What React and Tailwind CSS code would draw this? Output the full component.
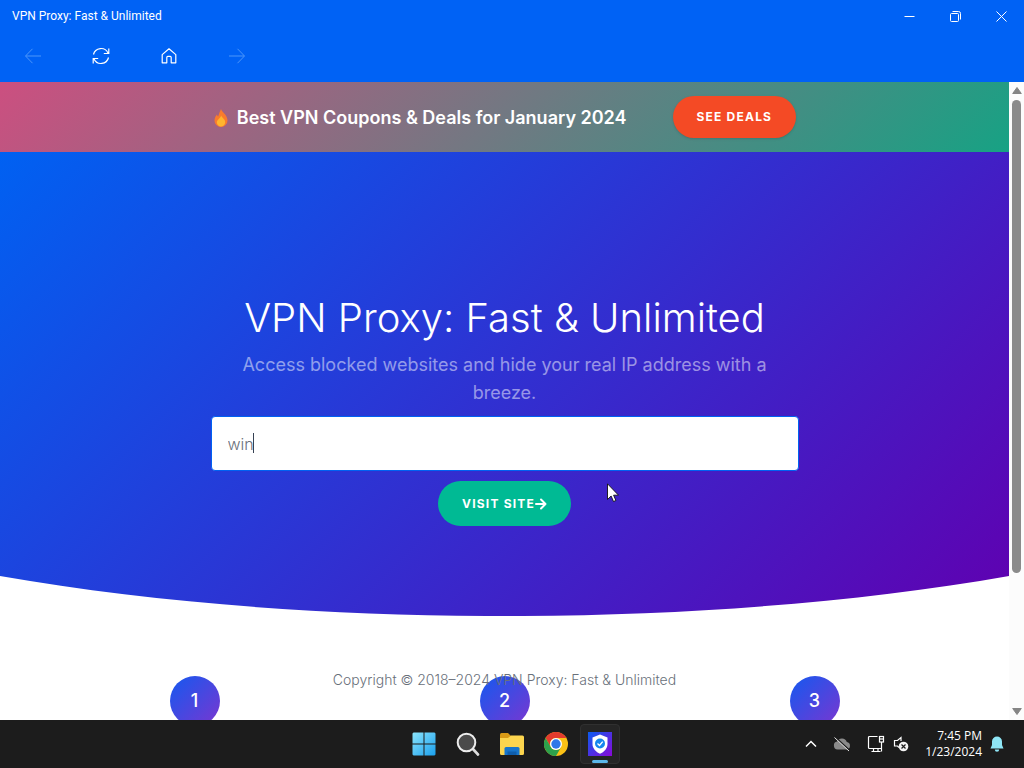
import { useState } from "react";

const APP_NAME = "VPN Proxy: Fast & Unlimited";

const BackIcon = () => (
    <svg className="w-4 h-4" viewBox="0 0 16 16" fill="none" stroke="currentColor">
        <path d="M16 8H0.8M7.5 0.8L0.5 8l7 7.2" />
    </svg>
);

const ForwardIcon = () => (
    <svg className="w-4 h-4" viewBox="0 0 16 16" fill="none" stroke="currentColor">
        <path d="M0 8h15.2M8.5 0.8l7 7.2-7 7.2" />
    </svg>
);

const ReloadIcon = () => (
    <svg className="w-[18px] h-[18px]" viewBox="0 0 18 18" fill="none" stroke="currentColor" strokeWidth="1.2">
        <path d="M1.5 7.5A7.7 7.7 0 0 1 16 6M16.8 1.5v5h-5M16.5 10.5A7.7 7.7 0 0 1 2 12M1.2 16.5v-5h5" />
    </svg>
);

const HomeIcon = () => (
    <svg className="w-4 h-4" viewBox="0 0 16 16" fill="none" stroke="currentColor" strokeWidth="1.2" strokeLinejoin="round">
        <path d="M1.2 6.6L8 0.8l6.8 5.8v8.2h-4.6V9.4a1 1 0 0 0-1-1H6.8a1 1 0 0 0-1 1v5.4H1.2z" />
    </svg>
);

const TitleBar = () => (
    <div className="h-8 flex items-center justify-between pl-3">
        <span className="text-xs font-[Roboto,sans-serif]">{APP_NAME}</span>
        <div className="flex h-full">
            <button aria-label="Minimize" className="w-[46px] flex items-center justify-center">
                <svg className="w-[11px] h-[11px]" viewBox="0 0 11 11" stroke="currentColor">
                    <path d="M0.5 5.5h10" />
                </svg>
            </button>
            <button aria-label="Restore" className="w-[46px] flex items-center justify-center">
                <svg className="w-[11px] h-[11px]" viewBox="0 0 11 11" fill="none" stroke="currentColor">
                    <rect x="0.5" y="2.5" width="8" height="8" rx="1" />
                    <path d="M2.5 0.5h6a2 2 0 0 1 2 2v6" />
                </svg>
            </button>
            <button aria-label="Close" className="w-[46px] flex items-center justify-center">
                <svg className="w-[11px] h-[11px]" viewBox="0 0 11 11" stroke="currentColor">
                    <path d="M0.5 0.5l10 10M10.5 0.5l-10 10" />
                </svg>
            </button>
        </div>
    </div>
);

const Toolbar = () => (
    <nav className="h-[50px] flex items-center pl-4 pb-0.5 gap-[34px]">
        <button aria-label="Back" disabled className="w-[34px] h-8 flex items-center justify-center text-[#4c96fa]">
            <BackIcon />
        </button>
        <button aria-label="Reload" className="w-[34px] h-8 flex items-center justify-center">
            <ReloadIcon />
        </button>
        <button aria-label="Home" className="w-[34px] h-8 flex items-center justify-center">
            <HomeIcon />
        </button>
        <button aria-label="Forward" disabled className="w-[34px] h-8 flex items-center justify-center text-[#4c96fa]">
            <ForwardIcon />
        </button>
    </nav>
);

const DealsBanner = () => (
    <div className="h-[70px] flex items-center justify-center gap-[46px] bg-linear-[135deg] from-[#cc4f80] to-[#17a284] text-white">
        <p className="flex items-center gap-2 pt-0.5 text-lg font-semibold">
            <svg className="w-4 h-5" viewBox="0 0 16 20">
                <path d="M8 1c.6 3 6.5 5.600 6.500 11.500A6.500 6.500 0 0 1 8 19a6.500 6.500 0 0 1-6.500-6.500C1.500 9.500 3 7.500 4 6.500c.2 1 .5 1.500 1.200 2C6 6 7 3 8 1z" fill="#f97b2d" />
                <path d="M8.200 7.500c.5 2 4 3.500 4 6.700A4.200 4.200 0 0 1 8 18.400a4.200 4.200 0 0 1-4.200-4.200c0-2.200 3.200-3.400 4.400-6.700z" fill="#ffb52e" />
            </svg>
            Best VPN Coupons &amp; Deals for January 2024
        </p>
        <a
            href="#deals"
            className="h-[42px] px-6 flex items-center rounded-full bg-[#f44a25] text-xs font-bold tracking-widest shadow"
        >
            SEE DEALS
        </a>
    </div>
);

const Hero = () => {
    const [site, setSite] = useState("win");

    return (
        <header className="bg-linear-[135deg] from-[#0061f2] to-[#6000b0] text-white">
            <div className="pt-[142px] pb-[50px] px-4 flex flex-col items-center text-center">
                <h1 className="text-[40px] leading-12 font-light">{APP_NAME}</h1>
                <p className="mt-[9px] max-w-[560px] text-lg leading-7 text-white/50">
                    Access blocked websites and hide your real IP address with a breeze.
                </p>
                <form
                    className="mt-[9px] w-full max-w-[588px] flex flex-col items-center gap-[10px]"
                    onSubmit={(e) => e.preventDefault()}
                >
                    <div className="relative w-full">
                        <input
                            aria-label="Website address"
                            value={site}
                            onChange={(e) => setSite(e.target.value)}
                            className="block w-full h-[55px] px-4 rounded bg-white text-base font-light text-[#69707a] border border-[#0061f2] focus:outline-none"
                        />
                        <span className="absolute left-[42px] top-[17px] w-px h-5 bg-gray-700" />
                    </div>
                    <button
                        type="submit"
                        className="h-[45px] px-6 flex items-center rounded-full bg-[#00ba94] text-xs font-bold tracking-widest"
                    >
                        VISIT SITE
                        <svg className="w-3 h-3" viewBox="0 0 12 12" fill="none" stroke="currentColor" strokeWidth="2">
                            <path d="M1 6h9.500M6 1.500L10.500 6 6 10.500" strokeLinecap="round" strokeLinejoin="round" />
                        </svg>
                    </button>
                </form>
            </div>
            <svg className="block w-full h-10" viewBox="0 0 100 40" preserveAspectRatio="none">
                <path d="M0 0C30 53.400 70 53.400 100 0V40H0z" fill="#fff" />
            </svg>
        </header>
    );
};

const Steps = () => (
    <section className="relative pt-[60px]">
        <ol className="max-w-[930px] mx-auto grid grid-cols-3 justify-items-center">
            {[1, 2, 3].map((step) => (
                <li
                    key={step}
                    className="w-[50px] h-[50px] flex items-center justify-center rounded-full bg-linear-[135deg] from-[#1459f0] to-[#7a36d0] text-lg font-medium text-white"
                >
                    {step}
                </li>
            ))}
        </ol>
        <p className="absolute inset-x-0 top-[54px] text-center text-sm font-light text-[#69707a]">
            Copyright © 2018–2024 {APP_NAME}
        </p>
    </section>
);

const ScrollBar = () => (
    <div className="w-[15px] shrink-0 flex flex-col items-center justify-between bg-[#fcfcfc] py-1">
        <svg className="w-[10px] h-[9px]" viewBox="0 0 10 9">
            <path d="M5 1.500L9.300 7.500H0.700z" fill="#858585" stroke="#858585" strokeLinejoin="round" />
        </svg>
        <div className="flex-1 w-full pt-[5px] flex justify-center">
            <div className="w-[9px] h-[78%] rounded-full bg-[#8b8b8b]" />
        </div>
        <svg className="w-[10px] h-[9px]" viewBox="0 0 10 9">
            <path d="M5 7.500L0.700 1.500h8.600z" fill="#858585" stroke="#858585" strokeLinejoin="round" />
        </svg>
    </div>
);

const StartIcon = () => (
    <svg className="w-6 h-6" viewBox="0 0 24 24">
        <defs>
            <linearGradient id="start" x1="0" y1="0" x2="1" y2="1">
                <stop offset="0" stopColor="#8be4fb" />
                <stop offset="1" stopColor="#1aa0ee" />
            </linearGradient>
        </defs>
        <path d="M1.500 0.500H11.500V11.500H0.500V1.500zM12.500 0.500H22.500L23.500 1.500V11.500H12.500zM0.500 12.500H11.500V23.500H1.500L0.500 22.500zM12.500 12.500H23.500V22.500L22.500 23.500H12.500z" fill="url(#start)" />
    </svg>
);

const SearchIcon = () => (
    <svg className="w-6 h-6" viewBox="0 0 24 24" fill="none">
        <path d="M16.500 16.500l5.500 6" stroke="#dcdcdc" strokeWidth="2.600" strokeLinecap="round" />
        <circle cx="10.500" cy="10.500" r="8.800" fill="#4a4a4a" stroke="#ececec" strokeWidth="2" />
    </svg>
);

const FolderIcon = () => (
    <svg className="w-6 h-6" viewBox="0 0 24 24">
        <path d="M0 2.500Q0 1 1.500 1H8l3 3-2 3H0z" fill="#d99a16" />
        <path d="M0 6h8l3-2.500h11.500Q24 3.500 24 5v16.500q0 1.500-1.500 1.500h-21Q0 23 0 21.500z" fill="#fcd54e" />
        <path d="M4.500 23v-6.500q0-1.500 1.500-1.500h12q1.500 0 1.500 1.500V23z" fill="#1775cb" />
        <path d="M7.500 23v-3.500h9V23z" fill="#0f5eac" />
    </svg>
);

const ChromeIcon = () => (
    <svg className="w-6 h-6" viewBox="0 0 24 24">
        <circle cx="12" cy="12" r="12" fill="#fbc116" />
        <path d="M1.600 6A12 12 0 0 1 22.400 6H12a6 6 0 0 0-5.200 9z" fill="#e33b2e" />
        <path d="M1.600 6A12 12 0 0 0 12 24l5.200-9A6 6 0 0 1 6.800 15z" fill="#2da14c" />
        <circle cx="12" cy="12" r="6" fill="#fff" />
        <circle cx="12" cy="12" r="4.700" fill="#2f76e8" />
    </svg>
);

const VpnIcon = () => (
    <svg className="w-6 h-6" viewBox="0 0 24 24">
        <defs>
            <linearGradient id="vpn" x1="0" y1="0" x2="1" y2="1">
                <stop offset="0" stopColor="#0a5cf0" />
                <stop offset="1" stopColor="#8a08d8" />
            </linearGradient>
        </defs>
        <path d="M0 0h24v24H0z" fill="url(#vpn)" />
        <path d="M12 2.500l7.500 3v6.500c0 4.500-3.500 8-7.500 9.800C8 20 4.500 16.500 4.500 12V5.500z" fill="#fff" />
        <circle cx="12" cy="11.500" r="5" fill="#1687ee" />
        <path d="M9.500 11.500l2 2 3.200-3.800" fill="none" stroke="#fff" strokeWidth="1.300" />
    </svg>
);

const CloudOffIcon = () => (
    <svg className="w-[18px] h-4" viewBox="0 0 18 16">
        <path d="M4.500 13.500a4 4 0 0 1-.4-7.900 5.200 5.200 0 0 1 9.700.4 3.800 3.800 0 0 1 0 7.500z" fill="#8a8a8a" />
        <path d="M2.500 1.200l14 13" stroke="#1c1c1c" strokeWidth="1.500" />
        <path d="M1.500 1.500l14.500 13.500" stroke="#e8e8e8" />
    </svg>
);

const NetworkIcon = () => (
    <svg className="w-[18px] h-[18px]" viewBox="0 0 18 18" fill="none" stroke="currentColor" strokeWidth="1.200">
        <path d="M10.500 1.500h-8a1 1 0 0 0-1 1v10a1 1 0 0 0 1 1H14M4.500 16.500h9M6.500 13.500v3M11 13.500v3M14.500 7v9.500" />
        <rect x="12.500" y="1.500" width="4" height="5.500" />
        <path d="M13 4h3" />
    </svg>
);

const MutedIcon = () => (
    <svg className="w-4 h-4" viewBox="0 0 16 16" fill="none" stroke="currentColor" strokeWidth="1.200">
        <path d="M8 5V1.500L4.500 4.500H1.500v5.500h3L6 11.500" />
        <circle cx="10.500" cy="10.500" r="4.800" fill="#f4f4f4" stroke="none" />
        <path d="M8.500 8.500l4 4M12.500 8.500l-4 4" stroke="#1c1c1c" />
    </svg>
);

const apps = [
    { name: "Start", Icon: StartIcon },
    { name: "Search", Icon: SearchIcon },
    { name: "File Explorer", Icon: FolderIcon },
    { name: "Google Chrome", Icon: ChromeIcon },
    { name: APP_NAME, Icon: VpnIcon, active: true },
];

const Taskbar = () => (
    <footer className="h-12 shrink-0 grid grid-cols-[1fr_auto_1fr] items-center bg-[#1c1c1c] text-white">
        <span />
        <div className="flex gap-1">
            {apps.map(({ name, Icon, active }) => (
                <button
                    key={name}
                    aria-label={name}
                    className={`relative w-10 h-10 flex items-center justify-center rounded ${active ? "bg-[#252525] border border-[#303030]" : ""}`}
                >
                    <Icon />
                    {active && <span className="absolute bottom-0 w-4 h-[3px] rounded-full bg-[#5cb8ea]" />}
                </button>
            ))}
        </div>
        <div className="flex items-center justify-end pr-5">
            <button aria-label="Show hidden icons" className="mr-4">
                <svg className="w-3 h-3" viewBox="0 0 12 12" fill="none" stroke="currentColor" strokeWidth="1.500">
                    <path d="M1 8.500l5-5 5 5" />
                </svg>
            </button>
            <div className="flex items-center mr-4">
                <CloudOffIcon />
                <div className="ml-4 flex items-center gap-2">
                    <NetworkIcon />
                    <MutedIcon />
                </div>
            </div>
            <div className="mr-2 text-right text-xs leading-4 font-['Open_Sans',sans-serif]">
                <div>7:45 PM</div>
                <div>1/23/2024</div>
            </div>
            <svg className="w-[14px] h-4" viewBox="0 0 14 16" fill="#8fe6f6">
                <path d="M7 0.500a5 5 0 0 1 5 5v3.500l1.500 3.500H0.500L2 9V5.500a5 5 0 0 1 5-5zM4.800 13.500h4.400a2.200 2.200 0 0 1-4.400 0z" />
            </svg>
        </div>
    </footer>
);

const App = () => (
    <div className="relative h-screen flex flex-col overflow-hidden font-[Inter,sans-serif]">
        <div className="shrink-0 bg-[#0062f5] text-white">
            <TitleBar />
            <Toolbar />
        </div>
        <div className="flex-1 min-h-0 flex">
            <main className="flex-1 min-w-0 overflow-hidden bg-white">
                <DealsBanner />
                <Hero />
                <Steps />
            </main>
            <ScrollBar />
        </div>
        <Taskbar />
        <svg className="absolute left-[607px] top-[483px] w-3 h-[19px]" viewBox="0 0 12 19">
            <path d="M0.500 0.800v15.700l3.600-3.500 2.400 5.500 2.400-1-2.300-5.300h4.900z" fill="#fff" stroke="#111" strokeWidth="0.900" />
        </svg>
    </div>
);

export default App;
